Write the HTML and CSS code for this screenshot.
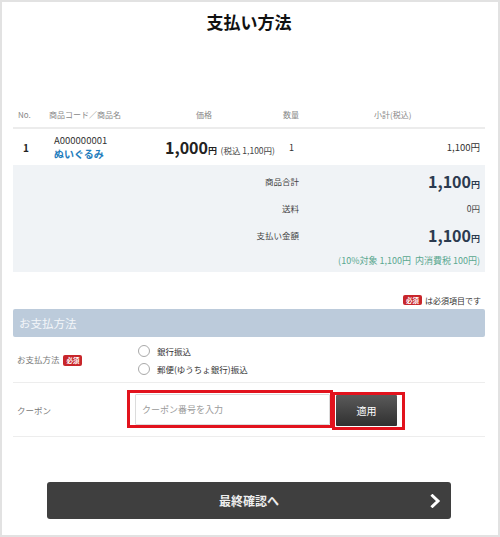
FILE: index.html
```html
<!DOCTYPE html>
<html lang="ja">
<head>
<meta charset="utf-8">
<title>支払い方法</title>
<link rel="stylesheet" href="styles.css">
</head>
<body>
<div class="page">
  <h1 class="title">支払い方法</h1>

  <div class="cart">
    <div class="grid thead">
      <div class="th th-no">No.</div>
      <div class="th th-item">商品コード／商品名</div>
      <div class="th th-price">価格</div>
      <div class="th th-qty">数量</div>
      <div class="th th-sub">小計(税込)</div>
    </div>
    <div class="grid trow">
      <div class="td td-no">1</div>
      <div class="td td-item">
        <div class="code">A000000001</div>
        <div class="name">ぬいぐるみ</div>
      </div>
      <div class="td td-price"><span class="big">1,000</span><span class="yen">円</span> <span class="taxin">(税込 1,100円)</span></div>
      <div class="td td-qty">1</div>
      <div class="td td-sub">1,100円</div>
    </div>

    <div class="summary">
      <div class="s-label">商品合計</div>
      <div class="s-value"><span class="big navy">1,100</span><span class="yen navy">円</span></div>
      <div class="s-label">送料</div>
      <div class="s-value small">0円</div>
      <div class="s-label">支払い金額</div>
      <div class="s-value"><span class="big navy">1,100</span><span class="yen navy">円</span></div>
      <div class="s-note">(10%対象 1,100円&nbsp;&nbsp;内消費税 100円)</div>
    </div>
  </div>

  <div class="req-note"><span class="badge">必須</span><span>は必須項目です</span></div>

  <div class="section-head">お支払方法</div>

  <div class="form-row pay-row">
    <div class="f-label">お支払方法 <span class="badge">必須</span></div>
    <div class="radios">
      <label class="radio"><span class="circle"></span>銀行振込</label>
      <label class="radio"><span class="circle"></span>郵便(ゆうちょ銀行)振込</label>
    </div>
  </div>

  <div class="form-row coupon-row">
    <div class="f-label c-label">クーポン</div>
    <div class="mark mark-input"><div class="coupon-input">クーポン番号を入力</div></div>
    <div class="mark mark-btn"><div class="apply">適用</div></div>
  </div>

  <div class="next">
    <span></span>
    <span class="next-text">最終確認へ</span>
    <svg class="chev" width="11" height="14" viewBox="0 0 11 14"><polyline points="2.5,1.8 8,7 2.5,12.2" fill="none" stroke="#ffffff" stroke-width="3" stroke-linecap="square"/></svg>
  </div>
</div>
</body>
</html>
```

FILE: styles.css
```css
html, body {
  margin: 0;
  padding: 0;
  background: #ffffff;
}
body {
  font-family: "Noto Sans CJK JP", "Noto Sans", sans-serif;
  color: #333333;
}
.page {
  box-sizing: border-box;
  width: 500px;
  height: 537px;
  border: 2px solid #e2e2e2;
  padding: 0 13px 0 11px;
  overflow: hidden;
}
.title {
  margin: 0;
  height: 40px;
  line-height: 40px;
  text-align: center;
  font-size: 17px;
  font-weight: 700;
  color: #111111;
}
.cart {
  margin-top: 61px;
}
.grid {
  display: grid;
  grid-template-columns: 32px 115px 118px 57px 1fr;
}
.thead {
  height: 24px;
  border-bottom: 2px solid #ececec;
  font-size: 8px;
  color: #888888;
  line-height: 24px;
}
.th-no { padding-left: 5px; }
.th-item { padding-left: 4px; }
.th-price { padding-left: 36px; }
.th-qty { padding-left: 5px; }
.th-sub { padding-left: 39px; }

.trow {
  height: 36px;
  align-items: center;
}
.td-no {
  padding-left: 10px;
  font-size: 10px;
  font-weight: 700;
  color: #222;
}
.td-item {
  padding-left: 9px;
  line-height: 13px;
}
.code {
  font-size: 9.5px;
  color: #333;
}
.name {
  font-size: 10px;
  font-weight: 700;
  color: #1f7dbd;
}
.td-price {
  padding-left: 5px;
  white-space: nowrap;
  color: #222;
}
.big {
  font-size: 16px;
  font-weight: 700;
  line-height: 20px;
}
.yen {
  font-size: 9px;
  font-weight: 700;
}
.taxin {
  font-size: 8.5px;
  color: #444;
}
.td-qty {
  padding-left: 11px;
  font-size: 9px;
  color: #333;
}
.td-sub {
  text-align: right;
  padding-right: 5px;
  font-size: 9.5px;
  color: #333;
}

.summary {
  display: grid;
  grid-template-columns: 1fr 186px;
  grid-template-rows: 27px 27px 27px 24px;
  padding-top: 2px;
  background: #f0f3f6;
  align-items: center;
}
.s-label {
  text-align: right;
  font-size: 8.5px;
  color: #444;
}
.s-value {
  text-align: right;
  padding-right: 5px;
}
.s-value.small {
  font-size: 8.5px;
  color: #444;
}
.navy {
  color: #2b3a4f;
}
.s-note {
  grid-column: 1 / 3;
  text-align: right;
  padding-right: 5px;
  font-size: 9px;
  color: #5aa890;
}

.req-note {
  margin-top: 21px;
  height: 14px;
  display: flex;
  align-items: center;
  justify-content: flex-end;
  gap: 3px;
  padding-right: 4px;
  font-size: 8px;
  color: #333;
}
.badge {
  display: inline-block;
  background: #c8262b;
  color: #ffffff;
  font-size: 6.5px;
  font-weight: 700;
  line-height: 10px;
  padding: 0 3px;
  border-radius: 2px;
  vertical-align: middle;
}
.section-head {
  margin-top: 2px;
  height: 28px;
  line-height: 28px;
  background: #bccbdb;
  border-radius: 2px;
  color: #f3f6f9;
  font-size: 11.5px;
  padding-left: 6px;
}

.form-row {
  display: flex;
  border-bottom: 1px solid #ededed;
}
.f-label {
  box-sizing: border-box;
  width: 114px;
  flex: none;
  padding-left: 4px;
  font-size: 8.5px;
  color: #777777;
}
.f-label .badge {
  margin-left: 2px;
  line-height: 11px;
}
.pay-row {
  height: 45px;
  align-items: center;
}
.radios {
  padding-left: 11px;
  display: flex;
  flex-direction: column;
}
.radio {
  display: flex;
  align-items: center;
  height: 18px;
  font-size: 8.5px;
  color: #333;
}
.circle {
  box-sizing: border-box;
  width: 12px;
  height: 12px;
  border: 1px solid #a9a9a9;
  border-radius: 50%;
  background: #fff;
  margin-right: 7px;
}

.coupon-row {
  height: 54px;
  box-sizing: border-box;
  padding-top: 7px;
  align-items: flex-start;
}
.c-label {
  align-self: center;
  margin-top: -7px;
}
.mark {
  border: 3px solid #e2131d;
  flex: none;
}
.mark-input {
  padding: 1px 0 0 5px;
  margin-left: 0;
}
.coupon-input {
  box-sizing: border-box;
  width: 195px;
  height: 31px;
  border: 1px solid #dcdcdc;
  border-radius: 1px;
  background: #fff;
  font-size: 9px;
  color: #9a9a9a;
  line-height: 29px;
  padding-left: 6px;
}
.mark-btn {
  margin-top: 2px;
  margin-left: -1px;
  padding: 0 5px 1px 1px;
}
.apply {
  width: 61px;
  height: 31px;
  line-height: 31px;
  text-align: center;
  background: linear-gradient(#5a5a5a, #303030);
  color: #ffffff;
  font-size: 10px;
  border-radius: 1px;
}

.next {
  margin: 45px 0 0 34px;
  width: 404px;
  height: 37px;
  box-sizing: border-box;
  background: #3f3f3f;
  border-radius: 3px;
  display: grid;
  grid-template-columns: 1fr auto 1fr;
  align-items: center;
  padding-right: 10px;
  padding-left: 10px;
}
.next-text {
  color: #eeeeee;
  font-size: 12px;
  font-weight: 700;
}
.chev {
  justify-self: end;
}
```
